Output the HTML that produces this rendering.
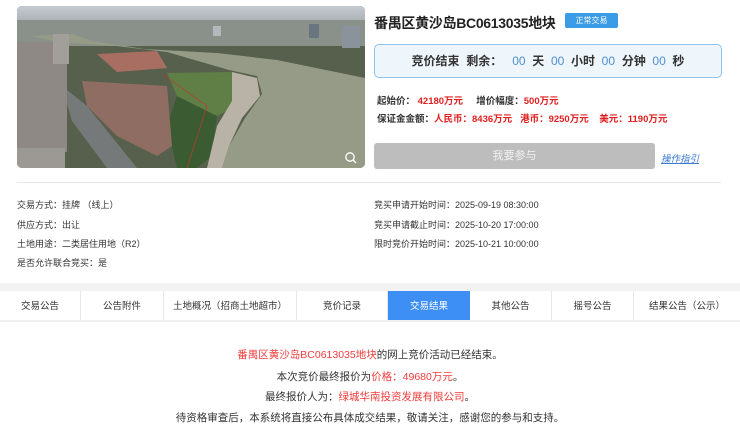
<!DOCTYPE html>
<html><head><meta charset="utf-8"><style>
*{margin:0;padding:0;box-sizing:border-box}
body{width:740px;height:434px;background:#fff;font-family:"Liberation Sans","Noto Sans CJK SC",sans-serif;color:#333;position:relative;overflow:hidden;font-size:10px}
.abs{position:absolute;white-space:nowrap}
.red{color:#e02020}
.b{font-weight:bold}
</style></head><body>
<svg class="abs" style="left:17px;top:6px" width="348" height="162" viewBox="0 0 348 162">
<defs><linearGradient id="sky" x1="0" y1="0" x2="0" y2="1"><stop offset="0" stop-color="#c5cad2"/><stop offset="1" stop-color="#aab1b3"/></linearGradient>
<clipPath id="c"><rect width="348" height="162" rx="5"/></clipPath></defs>
<g clip-path="url(#c)">
<rect width="348" height="162" fill="#56604c"/>
<rect width="348" height="16" fill="url(#sky)"/>
<rect y="14" width="348" height="26" fill="#89918a"/>
<path d="M15 30 L55 28 L75 35 L127 43 L200 47 L260 54 L348 72 L348 162 L205 162 L212 140 L228 112 L245 88 L240 70 L212 64 L150 46 L100 40 L40 36 Z" fill="#959b86"/>
<path d="M150 67 L215 66 L228 80 L220 100 L200 110 L175 115 L160 90 Z" fill="#5f7f47"/>
<path d="M160 90 L200 110 L195 150 L180 162 L160 162 L150 120 Z" fill="#3b5c33"/>
<path d="M215 66 L240 72 L243 90 L225 112 L212 140 L205 162 L190 162 L200 120 L215 95 Z" fill="#b8b3a6"/>
<path d="M80 48 L140 45 L150 62 L100 66 Z" fill="#a86e62"/>
<path d="M65 75 L150 80 L155 140 L140 150 L100 130 L70 100 Z" fill="#8f6d62"/>
<path d="M45 80 L70 100 L120 162 L90 162 L55 115 Z" fill="#767979"/>
<rect x="0" y="36" width="50" height="110" fill="#8e8985"/>
<rect x="36" y="28" width="16" height="30" fill="#a29e9a"/>
<rect x="0" y="142" width="48" height="20" fill="#9c9893"/>
<rect x="196" y="20" width="8" height="10" fill="#b5b8bb"/>
<rect x="292" y="18" width="10" height="14" fill="#6b7580"/>
<rect x="325" y="20" width="18" height="22" fill="#8a939b"/>
<path d="M145 68 L190 100 L170 162" stroke="#c0392b" stroke-width="0.7" fill="none"/>
<circle cx="333" cy="151" r="4.2" fill="none" stroke="#fff" stroke-width="1.3"/><path d="M336 154 L339 157" stroke="#fff" stroke-width="1.3"/>
</g></svg>

<div class="abs b" style="left:374px;top:13px;font-size:14px;color:#222;letter-spacing:-0.3px">番禺区黄沙岛BC0613035地块</div>
<div class="abs" style="left:565px;top:13px;width:53px;height:15px;background:#3a9be6;border-radius:2px;color:#fff;font-size:8px;line-height:15px;text-align:center">正常交易</div>

<div class="abs" style="left:374px;top:44px;width:348px;height:34px;background:#eef5fb;border:1px solid #8cc4f2;border-radius:5px;font-size:12px;line-height:32px;text-align:center;color:#333">
<b>竞价结束&nbsp; 剩余：</b>&nbsp;&nbsp; <span style="color:#4f8fd1">00</span>&nbsp; <b>天</b>&nbsp; <span style="color:#4f8fd1">00</span>&nbsp; <b>小时</b>&nbsp; <span style="color:#4f8fd1">00</span>&nbsp; <b>分钟</b>&nbsp; <span style="color:#4f8fd1">00</span>&nbsp; <b>秒</b></div>

<div class="abs b" style="left:377px;top:93px;font-size:9.5px">起始价： <span class="red">42180万元</span>&nbsp;&nbsp;&nbsp;&nbsp;&nbsp;增价幅度：<span class="red">500万元</span></div>
<div class="abs b" style="left:377px;top:111px;font-size:9.5px">保证金金额：<span class="red">人民币：8436万元&nbsp;&nbsp;&nbsp;港币：9250万元&nbsp;&nbsp;&nbsp;&nbsp;美元：1190万元</span></div>

<div class="abs" style="left:374px;top:143px;width:281px;height:26px;background:#bdbdbd;border-radius:3px;color:#f2f2f2;font-size:11px;line-height:26px;text-align:center">我要参与</div>
<div class="abs" style="left:661px;top:151px;font-size:9.5px;color:#3a7bd5;text-decoration:underline;font-style:italic">操作指引</div>

<div class="abs" style="left:17px;top:182px;width:704px;height:1px;background:#e6e6e6"></div>

<div class="abs" style="left:17px;top:198px;font-size:9px">交易方式：挂牌 （线上）</div>
<div class="abs" style="left:17px;top:218px;font-size:9px">供应方式：出让</div>
<div class="abs" style="left:17px;top:237px;font-size:9px">土地用途：二类居住用地（R2）</div>
<div class="abs" style="left:17px;top:256px;font-size:9px">是否允许联合竞买：是</div>
<div class="abs" style="left:374px;top:198px;font-size:9px">竞买申请开始时间：2025-09-19 08:30:00</div>
<div class="abs" style="left:374px;top:218px;font-size:9px">竞买申请截止时间：2025-10-20 17:00:00</div>
<div class="abs" style="left:374px;top:237px;font-size:9px">限时竞价开始时间：2025-10-21 10:00:00</div>

<div class="abs" style="left:0;top:283px;width:740px;height:8px;background:#f2f2f2"></div>
<div class="abs" style="left:0;top:291px;width:740px;height:31px;display:flex;font-size:9.5px;line-height:31px;text-align:center;border-bottom:2px solid #f0f0f0">
<div style="width:81px;border-right:1px solid #e8e8e8">交易公告</div>
<div style="width:83px;border-right:1px solid #e8e8e8">公告附件</div>
<div style="width:133px;border-right:1px solid #e8e8e8">土地概况（招商土地超市）</div>
<div style="width:91px;border-right:1px solid #e8e8e8">竞价记录</div>
<div style="width:82px;background:#3d8ef5;color:#fff">交易结果</div>
<div style="width:82px;border-right:1px solid #e8e8e8">其他公告</div>
<div style="width:82px;border-right:1px solid #e8e8e8">摇号公告</div>
<div style="width:106px">结果公告（公示）</div>
</div>

<div class="abs" style="left:0;top:347px;width:740px;text-align:center;font-size:10.5px"><span style="color:#f03c3c">番禺区黄沙岛BC0613035地块</span>的网上竞价活动已经结束。</div>
<div class="abs" style="left:0;top:369px;width:740px;text-align:center;font-size:10.5px">本次竞价最终报价为<span style="color:#f03c3c">价格：49680万元</span>。</div>
<div class="abs" style="left:0;top:389px;width:740px;text-align:center;font-size:10.5px">最终报价人为：<span style="color:#f03c3c">绿城华南投资发展有限公司</span>。</div>
<div class="abs" style="left:0;top:410px;width:740px;text-align:center;font-size:10.5px">待资格审查后，本系统将直接公布具体成交结果，敬请关注，感谢您的参与和支持。</div>
</body></html>
